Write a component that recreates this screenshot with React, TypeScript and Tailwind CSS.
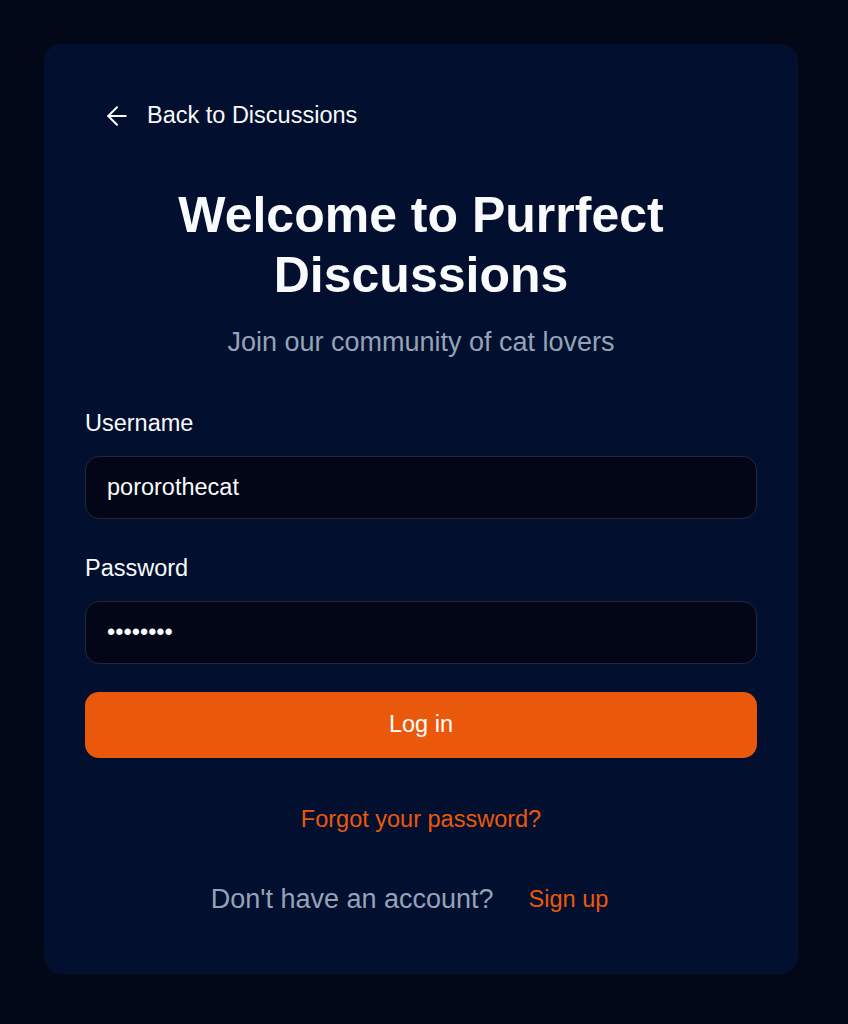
import { ArrowLeft } from 'lucide-react';

// ─── Login card ──────────────────────────────────────────────
function Field({ label, type, value }: { label: string; type: string; value: string }) {
  return (
    <div className="flex flex-col">
      <label className="text-[23.5px] leading-[32px] font-medium text-[#f8fafc]">{label}</label>
      <input
        type={type}
        defaultValue={value}
        readOnly
        className="mt-[17px] h-[63px] w-full rounded-[14px] border border-[#1e293b] bg-[#020617] px-[21px] text-[23.5px] text-[#f8fafc] outline-none"
      />
    </div>
  );
}

export default function App() {
  return (
    <div
      className="min-h-[1024px] w-full bg-[#020817] pt-[44px]"
      style={{ fontFamily: '"Liberation Sans", Arial, sans-serif' }}
    >
      <div className="ml-[44px] w-[754px] rounded-[17px] bg-[#030f2e] px-[41px] pt-[48px] pb-[57px]">
        {/* Back link */}
        <button className="flex h-[47px] items-center gap-[15px] rounded-[10px] px-[17px] text-[23.5px] text-[#f8fafc]">
          <ArrowLeft size={30} strokeWidth={1.6} />
          <span>Back to Discussions</span>
        </button>

        {/* Heading */}
        <div className="mt-[46px] text-center">
          <h1 className="text-[50px] leading-[60px] font-bold text-[#f8fafc]">
            Welcome to Purrfect
            <br />
            Discussions
          </h1>
          <p className="mt-[19px] text-[27px] leading-[36px] text-[#94a3b8]">Join our community of cat lovers</p>
        </div>

        {/* Form */}
        <div className="mt-[47px] flex flex-col gap-[33px]">
          <Field label="Username" type="text" value="pororothecat" />
          <Field label="Password" type="password" value="password" />
        </div>

        <button className="mt-[28px] h-[66px] w-full rounded-[14px] bg-[#ea580c] text-[23.5px] font-medium text-white">
          Log in
        </button>

        <div className="mt-[45px] text-center text-[23.5px] leading-[32px] text-[#ea580c]">Forgot your password?</div>

        <div className="mt-[46px] flex items-center justify-center gap-[12px] leading-[36px]">
          <span className="text-[27px] text-[#94a3b8]">Don&apos;t have an account?</span>
          <button className="px-[23px] text-[23.5px] text-[#ea580c]">Sign up</button>
        </div>
      </div>
    </div>
  );
}
